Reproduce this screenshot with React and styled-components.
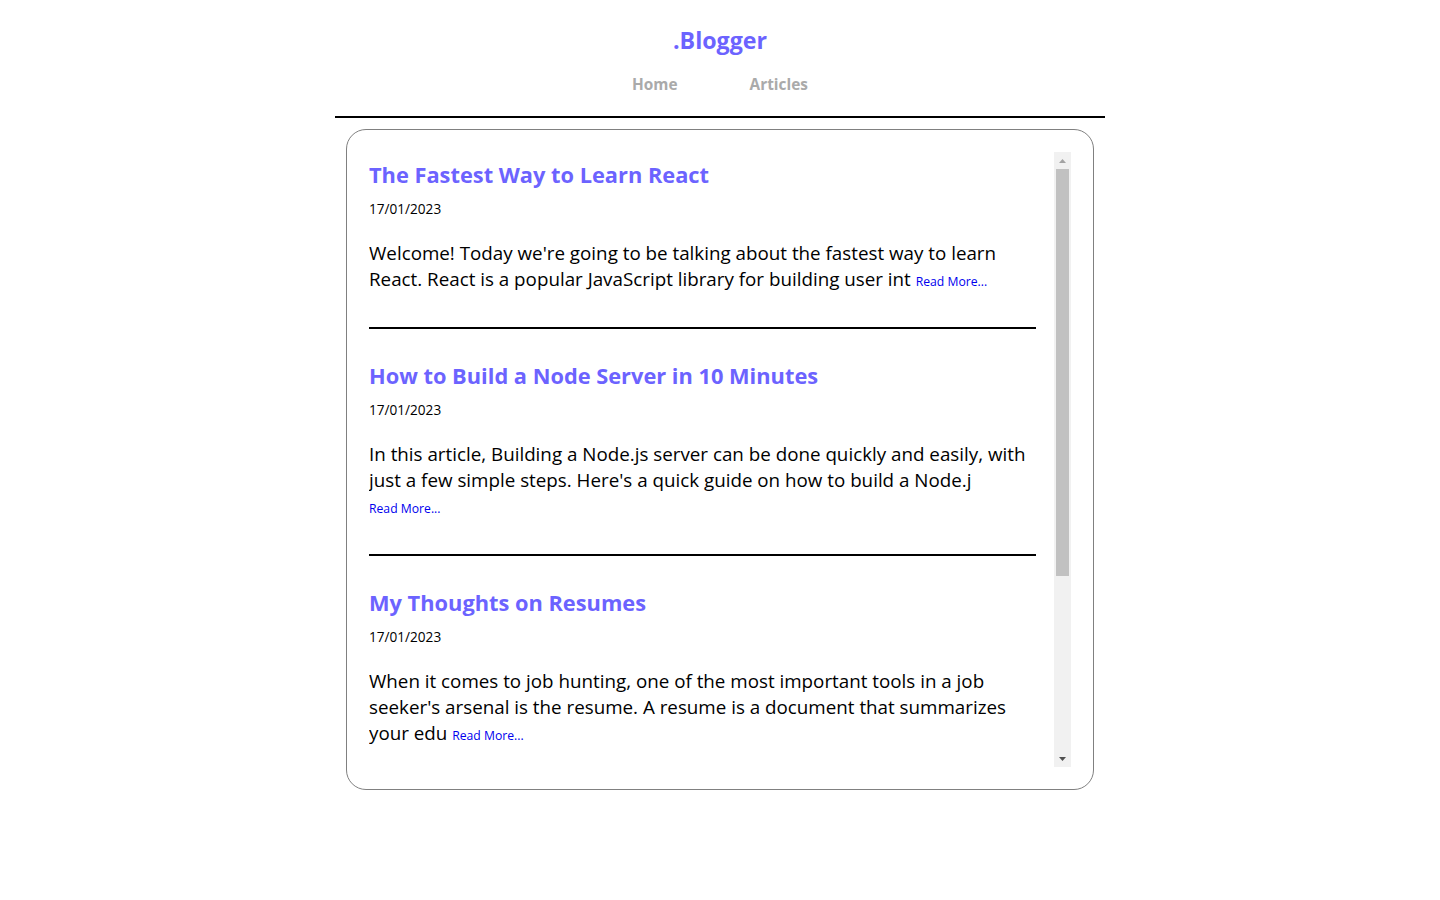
import React from "react";
import styled, { createGlobalStyle } from "styled-components";

const GlobalStyle = createGlobalStyle`
  html, body {
    margin: 0;
    padding: 0;
    background: #fff;
    font-family: "Open Sans", "Noto Sans", sans-serif;
  }
`;

const Page = styled.div`
  width: 770px;
  margin: 0 auto;
  padding-top: 24px;
`;

const Header = styled.header`
  display: flex;
  flex-direction: column;
  align-items: center;
  border-bottom: 2px solid #000;
  padding-bottom: 20px;
`;

const Logo = styled.h1`
  margin: 0;
  font-size: 23.2px;
  line-height: 32px;
  font-weight: 700;
  color: #6c63ff;
`;

const Nav = styled.nav`
  display: flex;
  gap: 72px;
  margin-top: 18px;
`;

const NavLink = styled.a`
  font-size: 15.4px;
  line-height: 22px;
  font-weight: 700;
  color: #aaa;
  text-decoration: none;
  cursor: pointer;
`;

const Card = styled.main`
  width: 748px;
  box-sizing: border-box;
  margin: 11px auto 0;
  border: 1px solid #808080;
  border-radius: 20px;
  padding: 22px;
  display: flex;
`;

const Viewport = styled.div`
  flex: 1;
  height: 615px;
  overflow: hidden;
`;

const ScrollTrack = styled.div`
  width: 17px;
  height: 615px;
  background: #f1f1f1;
  display: flex;
  flex-direction: column;
`;

const ScrollButton = styled.div`
  height: 17px;
  display: flex;
  align-items: center;
  justify-content: center;
  flex-shrink: 0;
`;

const ThumbArea = styled.div`
  flex: 1;
  padding: 0 2px;
`;

const Thumb = styled.div`
  background: #c1c1c1;
`;

const List = styled.div`
  width: 667px;
  padding-top: 7px;
`;

const Article = styled.article`
  padding-bottom: 32px;
  margin-bottom: 31px;
  border-bottom: ${(p) => (p.$last ? "none" : "2px solid #000")};
`;

const Title = styled.h2`
  margin: 0;
  font-size: 21.8px;
  line-height: 32px;
  font-weight: 700;
  color: #6c63ff;
`;

const Date = styled.p`
  margin: 8px 0 0;
  font-size: 13.6px;
  line-height: 19px;
  color: #000;
`;

const Body = styled.p`
  margin: 22px 0 0;
  font-size: 18.8px;
  line-height: 26px;
  color: #000;
`;

const ReadMore = styled.a`
  font-size: 12.2px;
  color: #0000ee;
  text-decoration: none;
  white-space: nowrap;
  cursor: pointer;
`;

const Arrow = ({ down, color }) => (
  <svg width="7" height="4" viewBox="0 0 7 4">
    <path d={down ? "M0 0H7L3.5 4Z" : "M3.5 0L7 4H0Z"} fill={color} />
  </svg>
);

const posts = [
  {
    title: "The Fastest Way to Learn React",
    date: "17/01/2023",
    text: "Welcome! Today we're going to be talking about the fastest way to learn React. React is a popular JavaScript library for building user int",
  },
  {
    title: "How to Build a Node Server in 10 Minutes",
    date: "17/01/2023",
    text: "In this article, Building a Node.js server can be done quickly and easily, with just a few simple steps. Here's a quick guide on how to build a Node.j",
  },
  {
    title: "My Thoughts on Resumes",
    date: "17/01/2023",
    text: "When it comes to job hunting, one of the most important tools in a job seeker's arsenal is the resume. A resume is a document that summarizes your edu",
  },
];

// visible height / content height, as the real scroll box would show
const thumbRatio = 0.7;

const App = () => {
  return (
    <>
      <GlobalStyle />
      <Page>
        <Header>
          <Logo>.Blogger</Logo>
          <Nav>
            <NavLink>Home</NavLink>
            <NavLink>Articles</NavLink>
          </Nav>
        </Header>
        <Card>
          <Viewport>
            <List>
              {posts.map((post, i) => (
                <Article key={post.title} $last={i === posts.length - 1}>
                  <Title>{post.title}</Title>
                  <Date>{post.date}</Date>
                  <Body>
                    {post.text} <ReadMore>Read More...</ReadMore>
                  </Body>
                </Article>
              ))}
            </List>
          </Viewport>
          <ScrollTrack>
            <ScrollButton>
              <Arrow color="#a3a3a3" />
            </ScrollButton>
            <ThumbArea>
              <Thumb style={{ height: `${thumbRatio * 100}%` }} />
            </ThumbArea>
            <ScrollButton>
              <Arrow down color="#505050" />
            </ScrollButton>
          </ScrollTrack>
        </Card>
      </Page>
    </>
  );
};

export default App;
